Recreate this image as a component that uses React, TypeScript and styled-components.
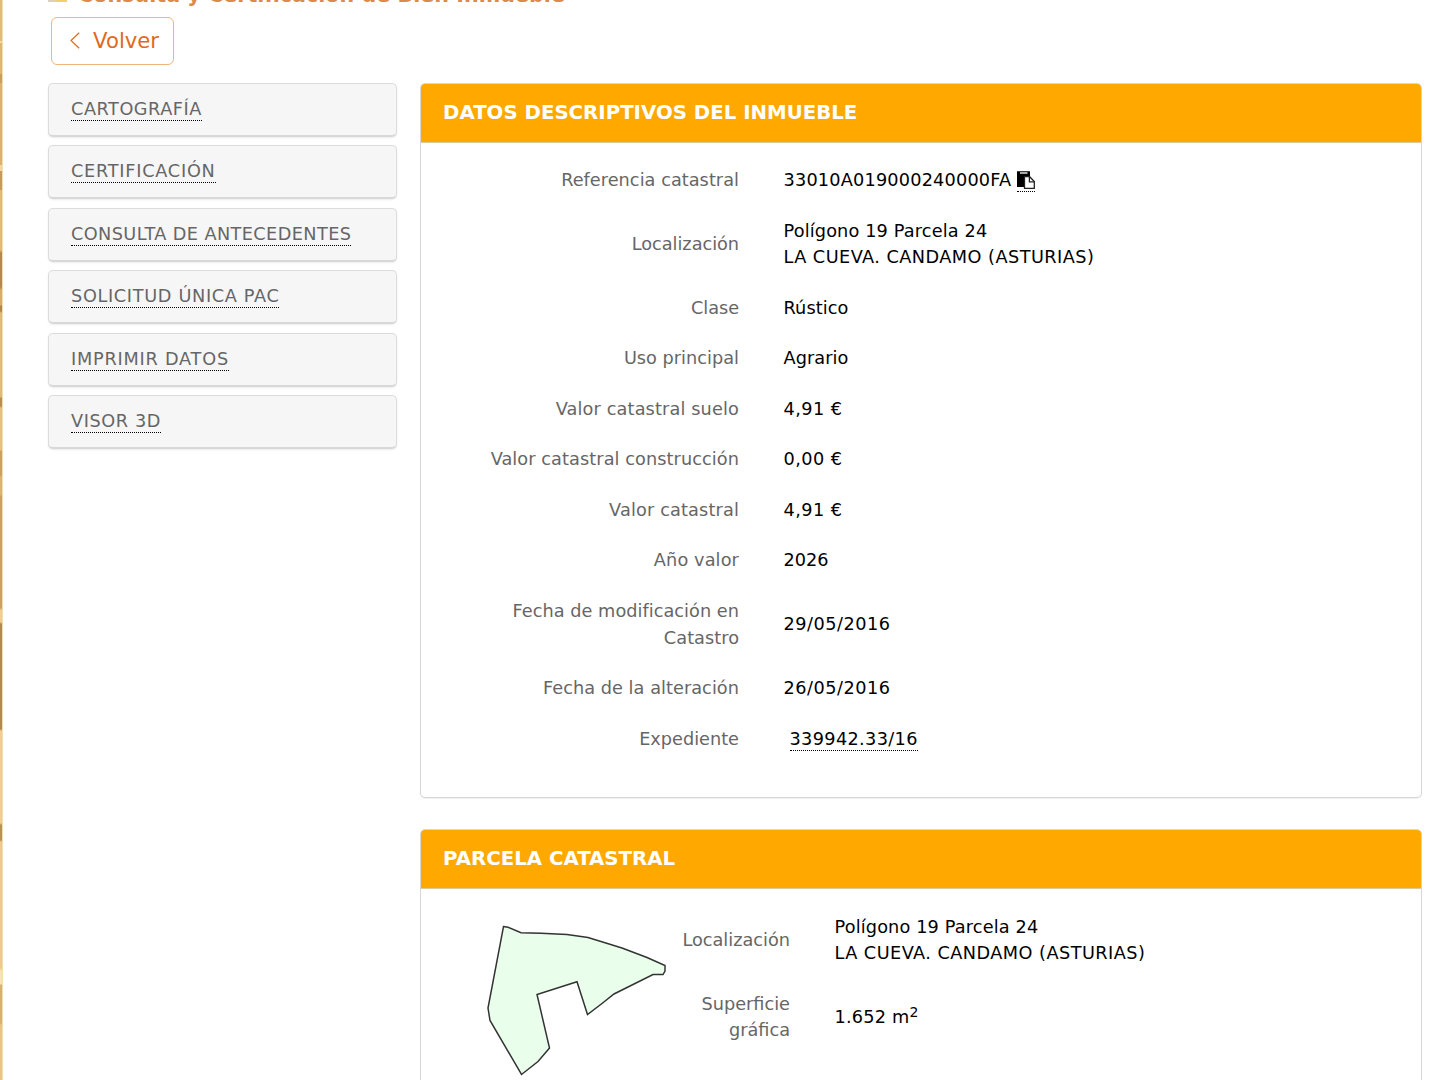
import React from "react";
import styled, { createGlobalStyle } from "styled-components";

const GlobalStyle = createGlobalStyle`
  * { box-sizing: border-box; }
  html, body { margin: 0; background: #fff; }
  body {
    height: 1080px;
    overflow: hidden;
    font-family: Verdana, "DejaVu Sans", sans-serif;
    font-size: 17.7px;
    line-height: 26.55px;
    color: #000;
  }
`;

const Page = styled.div`
  display: flex;
  height: 1080px;
  overflow: hidden;
`;

const Edge = styled.div`
  flex: none;
  width: 3px;
  border-right: 1px solid #f3dfae;
  background: linear-gradient(
    #e0bd74 0 41px, #f3dba0 41px 43px, #dcb76e 43px 74px, #c79f55 74px 83px,
    #dab46c 83px 165px, #f3d798 165px 171px, #c39c57 171px 190px, #e0bb72 190px 250px,
    #b3894a 253px 287px, #d6ae66 290px 305px, #b08846 306px 311px, #dfbc75 313px 397px,
    #b58f4b 398px 406px, #e5c27b 408px 450px, #c9a35c 451px 475px, #d9b56e 477px 495px,
    #c9a35d 496px 608px, #f0cf8d 610px 622px, #b08a4a 624px 729px, #f0cf8d 731px 823px,
    #b8924f 825px 840px, #eccb88 842px 968px, #f5e2bd 971px 984px, #d7b26a 985px 1023px,
    #e8c580 1025px
  );
`;

const Content = styled.main`
  flex: 1;
  min-width: 0;
  padding: 0 18.5px 0 45px;
`;

const Title = styled.h1`
  display: flex;
  align-items: flex-end;
  gap: 10px;
  margin: -18px 0 9px;
  height: 26px;
  color: #dc8a4c;
  font-size: 20.7px;
  line-height: 26px;
  white-space: nowrap;
`;

const TitleIcon = styled.svg`
  width: 20px;
  height: 20px;
  margin-bottom: 6px;
`;

const BackButton = styled.button`
  display: flex;
  align-items: center;
  gap: 13px;
  width: 123.4px;
  height: 47.5px;
  margin: 0 0 18.5px 2.6px;
  padding: 0 0 0 18.5px;
  border: 1px solid #efb67c;
  border-radius: 6px;
  background: #fff;
  color: #e06a1c;
  font: 21.2px/30px Verdana, "DejaVu Sans", sans-serif;
`;

const Columns = styled.div`
  display: grid;
  grid-template-columns: 349px 1fr;
  column-gap: 23px;
  align-items: start;
`;

const Menu = styled.nav`
  display: flex;
  flex-direction: column;
  gap: 8.4px;
`;

const MenuItem = styled.div`
  height: 54px;
  padding: 12px 22px;
  border: 1px solid #dcdcdc;
  border-bottom: 2px solid #d8d8d8;
  border-radius: 5px;
  background: #f6f6f6;
  box-shadow: 0 1px 2px rgba(0, 0, 0, 0.08);
  color: #666;
`;

const DottedLink = styled.a<{ $indent?: number }>`
  margin-left: ${(p) => p.$indent ?? 0}px;
  padding-bottom: 1px;
  border-bottom: 1px dotted #000;
  white-space: nowrap;
`;

const Track = styled.span<{ $spacing: number }>`
  letter-spacing: ${(p) => p.$spacing}px;
`;

const Cards = styled.div`
  display: flex;
  flex-direction: column;
  gap: 31px;
`;

const Card = styled.section<{ $height: number }>`
  height: ${(p) => p.$height}px;
  border: 1px solid #d6d6d6;
  border-radius: 5px;
  background: #fff;
  box-shadow: 0 1px 1px rgba(0, 0, 0, 0.06);
  overflow: hidden;
`;

const CardHeader = styled.h2`
  height: 59px;
  margin: 0;
  padding: 0 22px;
  border-bottom: 1px solid #dcc9a0;
  background: #ffa800;
  color: #fff;
  font-size: 19.75px;
  line-height: 57px;
`;

const CardBody = styled.div<{ $top: number }>`
  display: flex;
  padding: ${(p) => p.$top}px 22px 12px;
`;

const Rows = styled.dl<{ $label: number }>`
  flex: 1;
  display: grid;
  grid-template-columns: ${(p) => p.$label}px 1fr;
  column-gap: 44.5px;
  align-content: start;
  margin: 0;
`;

const Label = styled.dt`
  align-self: center;
  padding: 12px 0;
  color: #666;
  text-align: right;
`;

const Value = styled.dd`
  align-self: center;
  margin: 0;
  padding: 12px 0;
  white-space: nowrap;
`;

const PasteIcon = styled.svg`
  display: inline-block;
  width: 18px;
  height: 18px;
  vertical-align: -3px;
`;

const Power = styled.sup`
  font-size: 14px;
  line-height: 0;
  vertical-align: 6px;
`;

const Plot = styled.svg`
  flex: none;
  width: 181px;
  height: 153px;
  margin: 23.5px 0 0 43px;
`;

const menu: [string, number][] = [
  ["CARTOGRAFÍA", 0.533],
  ["CERTIFICACIÓN", 0.75],
  ["CONSULTA DE ANTECEDENTES", 0.4],
  ["SOLICITUD ÚNICA PAC", 0.66],
  ["IMPRIMIR DATOS", 0.776],
  ["VISOR 3D", 0.6],
];

const Paste = () => (
  <PasteIcon viewBox="0 0 18 18">
    <path d="M0 0.3H13V6H7V16H0z" fill="#000" />
    <path d="M3 1h7.5v2H3z" fill="#aaa" />
    <path d="M7.5 5.7h5.2l4.6 4.8v6.8H7.5z" fill="#fff" stroke="#222" strokeWidth="1.3" />
    <path d="M12.4 5.7v5.1h5" fill="none" stroke="#222" strokeWidth="1.3" />
  </PasteIcon>
);

const Location = () => (
  <>
    <Track $spacing={0.148}>Polígono 19 Parcela 24</Track>
    <br />
    <Track $spacing={0.455}>LA CUEVA. CANDAMO (ASTURIAS)</Track>
  </>
);

const data: [React.ReactNode, number, React.ReactNode, number][] = [
  ["Referencia catastral", 0.04, "33010A019000240000FA", 0.189],
  ["Localización", -0.03, <Location />, 0],
  ["Clase", -0.03, "Rústico", 0.09],
  ["Uso principal", 0.02, "Agrario", 0.07],
  ["Valor catastral suelo", 0.14, "4,91 €", 0.45],
  ["Valor catastral construcción", 0.08, "0,00 €", 0.45],
  ["Valor catastral", 0.147, "4,91 €", 0.45],
  ["Año valor", 0.12, "2026", 0],
  ["Fecha de modificación en Catastro", 0.04, "29/05/2016", 0.498],
  ["Fecha de la alteración", 0.05, "26/05/2016", 0.498],
];

export default function App() {
  return (
    <>
      <GlobalStyle />
      <Page>
        <Edge />
        <Content>
          <Title>
            <TitleIcon viewBox="0 0 20 20">
              <path d="M0 4h8l2 3h9v13H0z" fill="#f1cf6a" />
              <path d="M0 17l9 2v1H0z" fill="#d9d2c0" />
            </TitleIcon>
            Consulta y Certificación de Bien Inmueble
          </Title>
          <BackButton>
            <svg width="10" height="17" viewBox="0 0 10 17">
              <path d="M9.2 0.7L1 8.5l8.2 7.8" fill="none" stroke="#e06a1c" strokeWidth="1.2" />
            </svg>
            Volver
          </BackButton>
          <Columns>
            <Menu>
              {menu.map(([text, spacing]) => (
                <MenuItem key={text}>
                  <DottedLink>
                    <Track $spacing={spacing}>{text}</Track>
                  </DottedLink>
                </MenuItem>
              ))}
            </Menu>
            <Cards>
              <Card $height={715}>
                <CardHeader>DATOS DESCRIPTIVOS DEL INMUEBLE</CardHeader>
                <CardBody $top={12.1}>
                  <Rows $label={296}>
                    {data.map(([label, ls, value, vs], i) => (
                      <React.Fragment key={i}>
                        <Label>
                          <Track $spacing={ls}>{label}</Track>
                        </Label>
                        <Value>
                          <Track $spacing={vs}>{value}</Track>
                          {i === 0 && (
                            <DottedLink $indent={6}>
                              <Paste />
                            </DottedLink>
                          )}
                        </Value>
                      </React.Fragment>
                    ))}
                    <Label>Expediente</Label>
                    <Value>
                      <DottedLink $indent={6}>
                        <Track $spacing={0.35}>339942.33/16</Track>
                      </DottedLink>
                    </Value>
                  </Rows>
                </CardBody>
              </Card>
              <Card $height={400}>
                <CardHeader>PARCELA CATASTRAL</CardHeader>
                <CardBody $top={12.5}>
                  <Plot viewBox="486 925 181 153">
                    <path
                      d="M503.5 926.5L508 927.3L521 932.8L541 933.3L567 934.6L588 937.5L622 948L647 957.5L665 965.5V971L663 974.5H653L614 994L602 1003.5L587.5 1014.5L577 981.8L537 994.5L549.5 1048L538 1061.5L521.5 1074.5L490 1020.5L488 1008Z"
                      fill="#e9ffec"
                      stroke="#333"
                      strokeWidth="1.5"
                    />
                  </Plot>
                  <Rows $label={123}>
                    <Label>Localización</Label>
                    <Value>
                      <Location />
                    </Value>
                    <Label>
                      Superficie
                      <br />
                      gráfica
                    </Label>
                    <Value>
                      <Track $spacing={0.209}>1.652 m</Track>
                      <Power>2</Power>
                    </Value>
                  </Rows>
                </CardBody>
              </Card>
            </Cards>
          </Columns>
        </Content>
      </Page>
    </>
  );
}
